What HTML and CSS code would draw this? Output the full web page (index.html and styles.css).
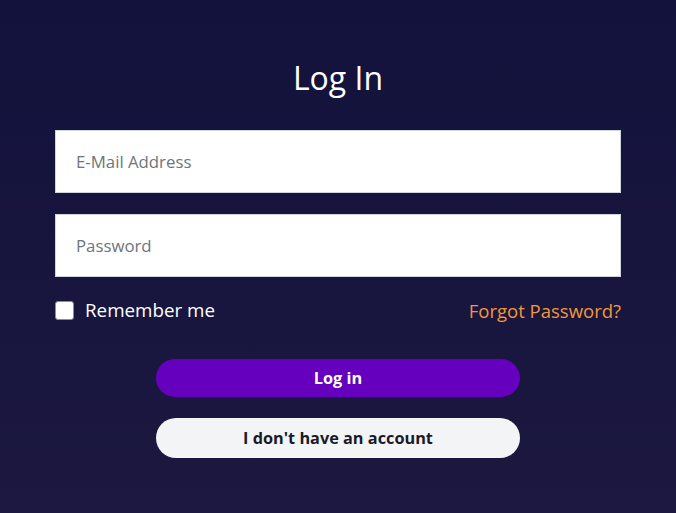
FILE: index.html
```html
<!DOCTYPE html>
<html lang="en">
<head>
<meta charset="utf-8">
<title>Log In</title>
<link rel="stylesheet" href="styles.css">
</head>
<body>
<main class="page">
  <h1 class="title">Log In</h1>
  <form class="form">
    <input class="field" type="email" placeholder="E-Mail Address">
    <input class="field" type="password" placeholder="Password">
    <div class="row">
      <label class="remember"><span class="box"></span>Remember me</label>
      <a class="forgot" href="#">Forgot Password?</a>
    </div>
    <div class="actions">
      <button class="btn primary" type="button">Log in</button>
      <button class="btn secondary" type="button">I don't have an account</button>
    </div>
  </form>
</main>
</body>
</html>
```
FILE: styles.css
```css
* { box-sizing: border-box; }
html, body { margin: 0; height: 100%; }
body {
  background: linear-gradient(180deg, #12123c 0%, #1c1840 100%);
  font-family: "Open Sans", "Noto Sans", sans-serif;
  color: #fff;
}
.page {
  padding: 58px 55px 0;
  display: flex;
  flex-direction: column;
}
.title {
  margin: 0 0 32px;
  text-align: center;
  font-size: 32px;
  font-weight: 500;
  line-height: 40px;
}
.form { display: flex; flex-direction: column; }
.field {
  height: 63px;
  width: 100%;
  margin: 0 0 21px;
  border: 1px solid #d0d4dc;
  background: #fff;
  padding: 0 20px;
  font-family: inherit;
  font-size: 16.8px;
  color: #333;
  outline: none;
}
.field::placeholder { color: #6c757d; }
.row {
  display: flex;
  justify-content: space-between;
  align-items: center;
  margin-top: -3px;
  height: 30px;
}
.remember {
  display: flex;
  align-items: center;
  gap: 11px;
  font-size: 18.8px;
}
.box {
  width: 19px; height: 19px;
  background: #fff;
  border: 1px solid #8a8aa0;
  border-radius: 3px;
}
.forgot {
  color: #f0973c;
  text-decoration: none;
  font-size: 18.5px;
}
.actions {
  display: flex;
  flex-direction: column;
  align-items: center;
  gap: 21px;
  margin-top: 34px;
}
.btn {
  width: 364px;
  border: none;
  border-radius: 20px;
  font-family: inherit;
  font-size: 16.3px;
  font-weight: 700;
}
.primary { height: 38px; background: #6500bf; color: #fff; }
.secondary { height: 40px; background: #f3f4f6; color: #1a1a2a; }
```
